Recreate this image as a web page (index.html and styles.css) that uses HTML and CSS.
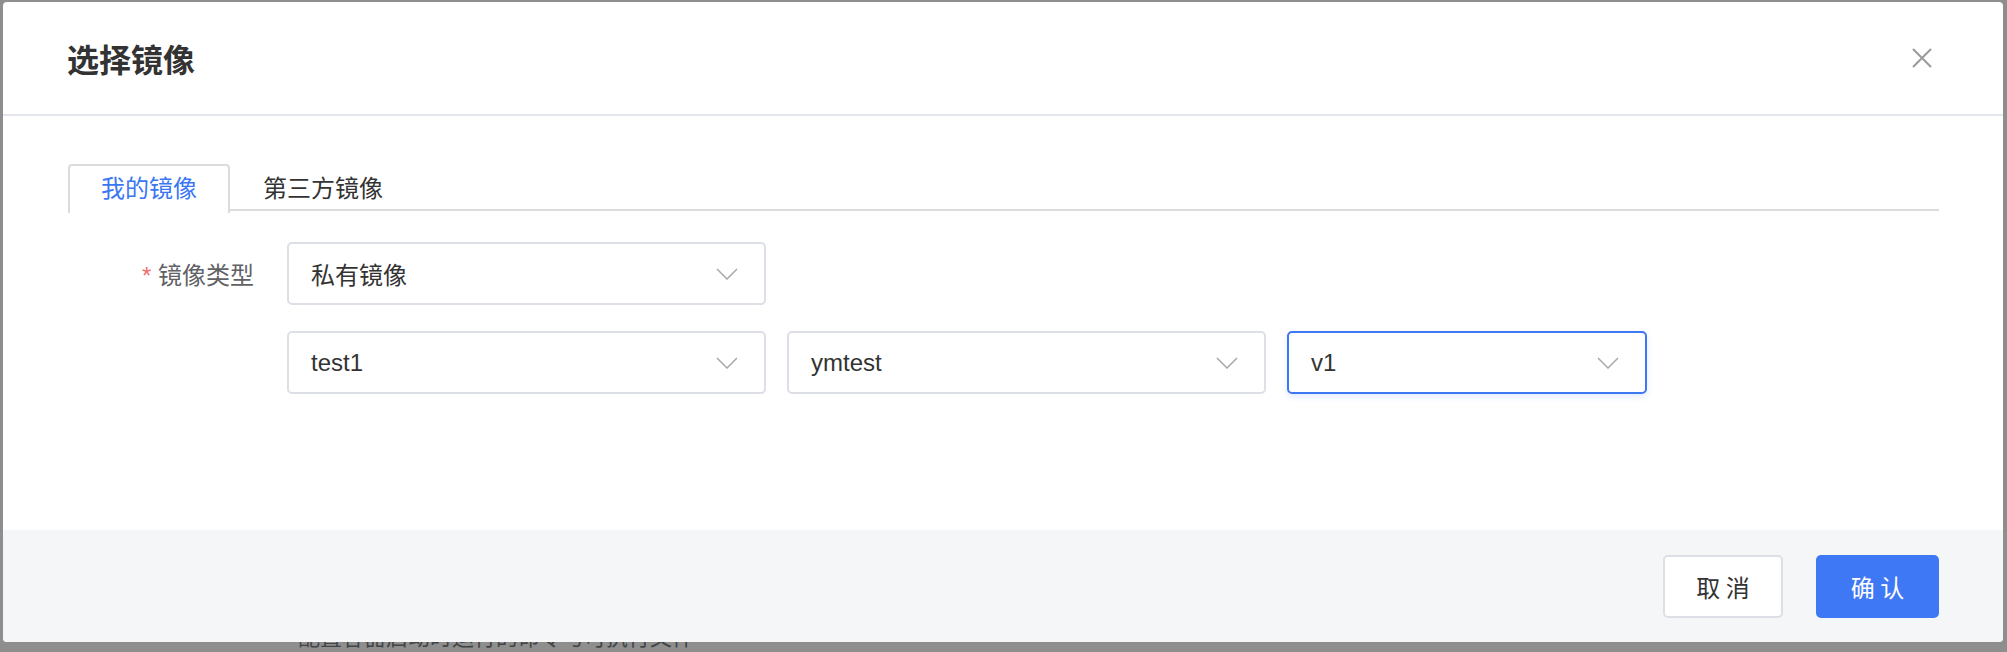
FILE: index.html
```html
<!DOCTYPE html>
<html lang="zh-CN">
<head>
    <meta charset="UTF-8">
    <meta name="viewport" content="width=device-width, initial-scale=1.0">
    <title>选择镜像</title>
    <link rel="stylesheet" href="styles.css">
</head>
<body>
    <div class="dialog">
        <div class="dialog-header">
            <h2>选择镜像</h2>
            <span class="close">
                <svg width="22" height="22" viewBox="0 0 22 22"><path d="M2 2 L20 20 M20 2 L2 20" stroke="#9a9a9a" stroke-width="2" fill="none"/></svg>
            </span>
        </div>

        <div class="dialog-body">
            <div class="tabs">
                <div class="tab active">我的镜像</div>
                <div class="tab">第三方镜像</div>
            </div>

            <div class="form-row">
                <label class="form-label"><span class="req">*</span> 镜像类型</label>
                <div class="selects">
                    <div class="select wide">
                        <span>私有镜像</span>
                        <svg class="arrow" width="22" height="12" viewBox="0 0 22 12"><path d="M1 1 L11 11 L21 1" stroke="#a8a8a8" stroke-width="1.5" fill="none"/></svg>
                    </div>
                </div>
            </div>

            <div class="form-row">
                <label class="form-label"></label>
                <div class="selects">
                    <div class="select wide">
                        <span>test1</span>
                        <svg class="arrow" width="22" height="12" viewBox="0 0 22 12"><path d="M1 1 L11 11 L21 1" stroke="#a8a8a8" stroke-width="1.5" fill="none"/></svg>
                    </div>
                    <div class="select wide">
                        <span>ymtest</span>
                        <svg class="arrow" width="22" height="12" viewBox="0 0 22 12"><path d="M1 1 L11 11 L21 1" stroke="#a8a8a8" stroke-width="1.5" fill="none"/></svg>
                    </div>
                    <div class="select narrow focus">
                        <span>v1</span>
                        <svg class="arrow" width="22" height="12" viewBox="0 0 22 12"><path d="M1 1 L11 11 L21 1" stroke="#a8a8a8" stroke-width="1.5" fill="none"/></svg>
                    </div>
                </div>
            </div>
        </div>

        <div class="dialog-footer">
            <button class="btn">取 消</button>
            <button class="btn primary">确 认</button>
        </div>
    </div>
    <div class="under">
        <span class="under-text">配置容器启动时运行的命令与可执行文件</span>
    </div>
</body>
</html>
```

FILE: styles.css
```css
body {
    margin: 0;
    background: #8e8e8e;
    font-family: "Liberation Sans", "Noto Sans CJK SC", sans-serif;
    color: #333;
    overflow: hidden;
}

.dialog {
    position: relative;
    z-index: 1;
    margin: 2px 4px 0 3px;
    height: 640px;
    background: #fff;
    border-radius: 4px;
    display: flex;
    flex-direction: column;
    overflow: hidden;
}

.dialog-header {
    height: 112px;
    border-bottom: 2px solid #e3e6ec;
    display: flex;
    align-items: center;
    justify-content: space-between;
    padding: 0 70px 0 64px;
}

.dialog-header h2 {
    margin: 0;
    font-size: 32px;
    font-weight: bold;
    color: #333;
}

.close {
    display: flex;
}

.dialog-body {
    flex: 1;
    padding: 48px 64px 0 65px;
}

.tabs {
    display: flex;
    height: 45px;
    border-bottom: 2px solid #dcdcdc;
}

.tab {
    padding: 0 31px;
    font-size: 24px;
    line-height: 45px;
    color: #333;
    border: 2px solid transparent;
    border-bottom: none;
    border-radius: 4px 4px 0 0;
    margin-bottom: -2px;
}

.tab.active {
    color: #3b77f2;
    border-color: #dcdcdc;
    background: #fff;
    height: 47px;
}

.form-row {
    display: flex;
    align-items: center;
    margin-top: 31px;
}

.form-row + .form-row {
    margin-top: 26px;
}

.form-label {
    width: 186px;
    margin-right: 33px;
    text-align: right;
    font-size: 24px;
    color: #606266;
}

.req {
    color: #f56c6c;
}

.selects {
    display: flex;
    gap: 21px;
}

.select {
    box-sizing: border-box;
    height: 63px;
    border: 2px solid #dcdfe6;
    border-radius: 5px;
    display: flex;
    align-items: center;
    justify-content: space-between;
    padding: 0 26px 0 22px;
    font-size: 24px;
    color: #333;
}

.select.wide {
    width: 479px;
}

.select.narrow {
    width: 360px;
}

.select.focus {
    border-color: #3e77f3;
    box-shadow: 0 3px 6px rgba(62, 119, 243, 0.15);
}

.dialog-footer {
    height: 112px;
    background: #f5f6f8;
    display: flex;
    align-items: center;
    justify-content: flex-end;
    gap: 33px;
    padding: 0 64px;
}

.btn {
    height: 63px;
    width: 120px;
    border: 2px solid #dcdfe6;
    border-radius: 5px;
    background: #fff;
    font-family: "Noto Sans CJK SC", sans-serif;
    font-size: 24px;
    color: #333;
}

.btn.primary {
    width: 123px;
    background: #3f78f5;
    border-color: #3f78f5;
    color: #fff;
}

.under {
    margin-top: -15px;
    padding-left: 298px;
    font-size: 22px;
    line-height: 22px;
}

.under-text {
    color: #444;
}
```
